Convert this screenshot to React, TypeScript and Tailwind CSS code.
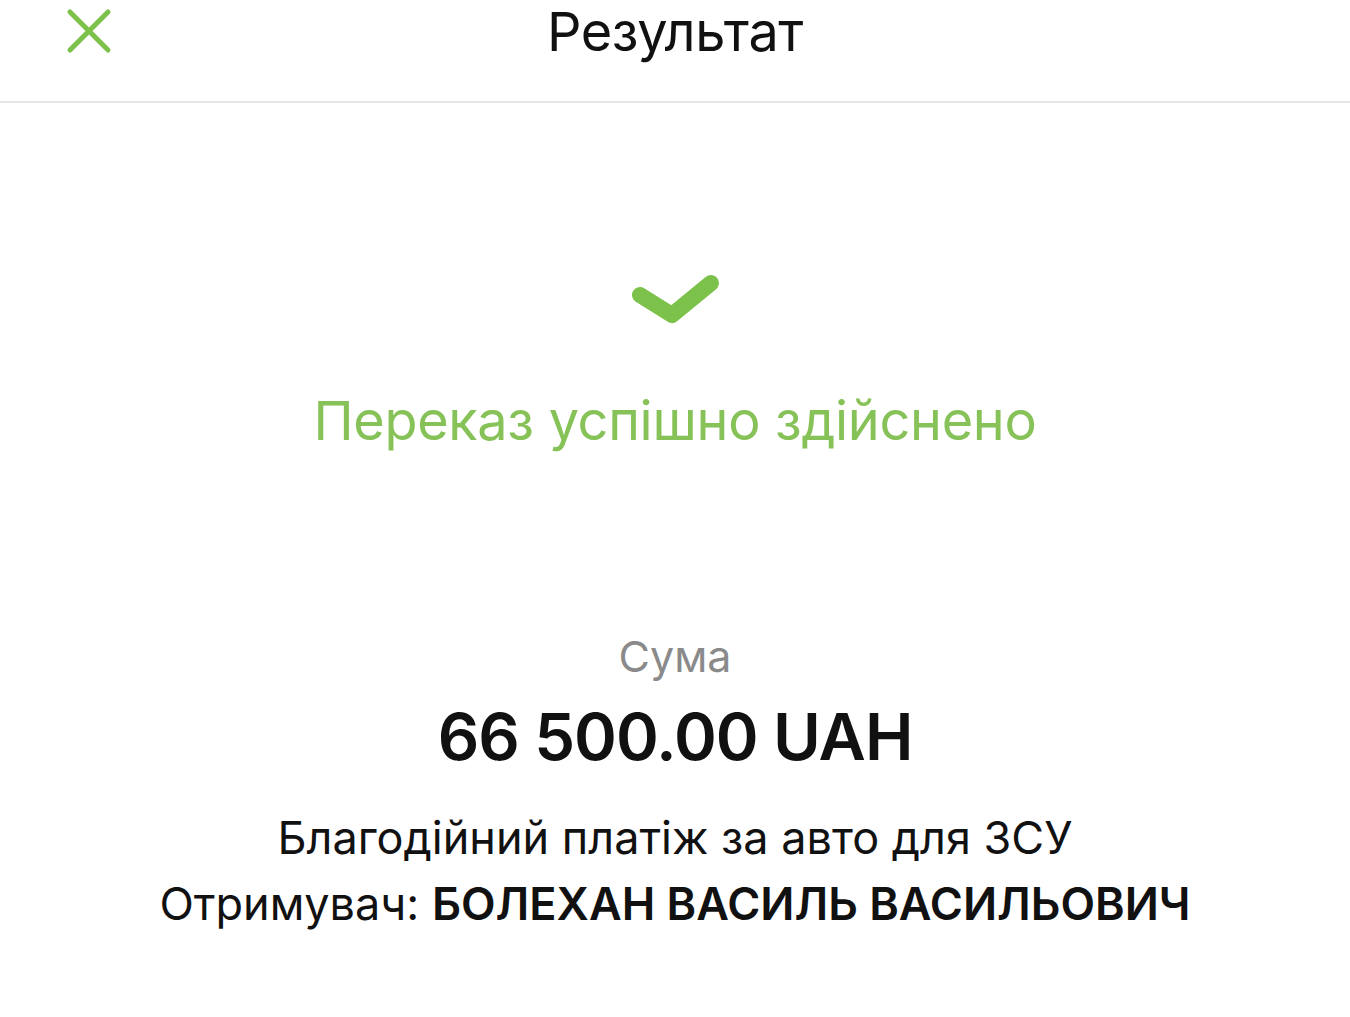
export default function App() {
  return (
    <div
      className="min-h-screen bg-white text-black"
      style={{ fontFamily: "Inter, 'Noto Sans', sans-serif" }}
    >
      {/* Header */}
      <header className="relative flex h-[103px] items-start justify-center border-b-2 border-[#e6e6e6]">
        <button className="absolute left-[62px] top-[4px] p-1 text-[#7cc24a]" aria-label="Закрити">
          <svg width="46" height="46" viewBox="0 0 46 46" fill="none">
            <path d="M4 4 L42 42 M42 4 L4 42" stroke="currentColor" strokeWidth="5" strokeLinecap="round" />
          </svg>
        </button>
        <h1 className="mt-[2px] text-[54px] font-normal leading-[60px] tracking-[-0.5px] text-[#111]">
          Результат
        </h1>
      </header>

      <main className="flex flex-col items-center">
        {/* Success icon */}
        <svg className="mt-[168px]" width="90" height="54" viewBox="0 0 90 54" fill="none">
          <path d="M10 24 L42 44 L81 12" stroke="#7cc24a" strokeWidth="16" strokeLinecap="round" strokeLinejoin="round" />
        </svg>

        <p className="mt-[64px] text-[54px] leading-[64px] tracking-[-0.3px] text-[#86c257]">
          Переказ успішно здійснено
        </p>

        <p className="mt-[178px] text-[43px] leading-[50px] text-[#8a8a8a]">Сума</p>

        <p className="mt-[18px] text-[65px] font-semibold leading-[76px] tracking-[-1px] text-[#111]">
          66 500.00 UAH
        </p>

        <div className="mt-[30px] flex flex-col items-center text-[45px] leading-[66px] text-[#111]">
          <p>Благодійний платіж за авто для ЗСУ</p>
          <p>
            Отримувач: <span className="font-semibold">БОЛЕХАН ВАСИЛЬ ВАСИЛЬОВИЧ</span>
          </p>
        </div>
      </main>
    </div>
  );
}
